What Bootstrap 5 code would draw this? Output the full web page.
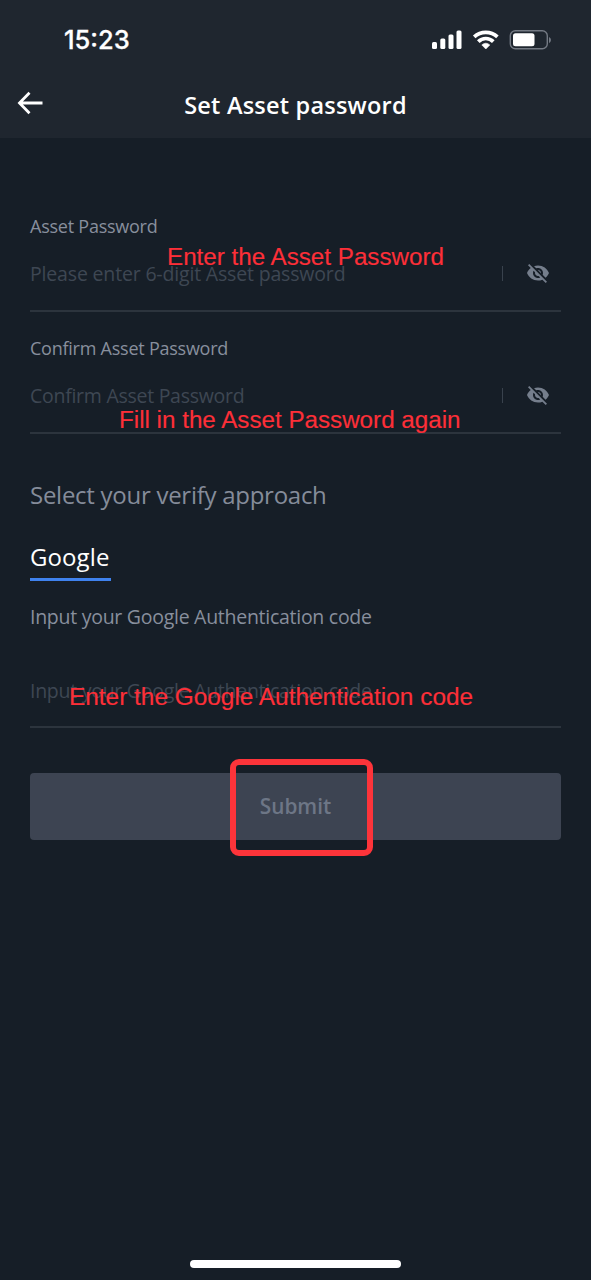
<!DOCTYPE html>
<html lang="en">
<head>
<meta charset="utf-8">
<meta name="viewport" content="width=device-width, initial-scale=1">
<title>Set Asset password</title>
<link href="https://cdn.jsdelivr.net/npm/bootstrap@5.3.0/dist/css/bootstrap.min.css" rel="stylesheet">
<style>
  body { background: #161e27; color: #fff; font-family: "Open Sans", "Noto Sans", sans-serif; height: 1280px; overflow: hidden; }
  .app-header { background: #1f262f; height: 138px; }
  .status-bar { height: 79px; padding: 0 40px 0 64px; }
  .clock { font: 500 25.5px/1 Inter, sans-serif; -webkit-text-stroke: .3px #fff; }
  .title-bar { height: 52px; padding: 0 17px; }
  .title-bar h1 { font-size: 23.5px; font-weight: 600; letter-spacing: .22px; line-height: 52px; }
  .back { width: 27px; }
  .back svg { margin-top: -5px; }
  main { padding: 73px 30px 0; }
  .field { height: 101px; border-bottom: 2px solid #2c343d; }
  .field + .field { margin-top: 21px; }
  .field label { display: block; font-size: 18px; line-height: 30px; letter-spacing: -.24px; color: #888f9d; }
  .entry { height: 64px; }
  .entry .form-control { height: 40px; font-size: 19.5px; letter-spacing: -.17px; color: #fff; }
  .entry #pw2 { letter-spacing: -.27px; }
  .entry .form-control::placeholder { color: #3e4753; opacity: 1; }
  .divider { width: 1.5px; height: 15px; background: #39424d; }
  .eye { width: 24px; margin: 0 11px 0 23px; fill: #757e8c; }
  .section-title { font-size: 24px; line-height: 36px; letter-spacing: -.27px; color: #858c9a; margin-top: 43px; }
  .method { font-size: 24px; line-height: 40px; height: 44px; width: 81px; letter-spacing: .1px; border-bottom: 3px solid #3f82ee; margin-top: 24px; }
  .code-field { height: 126px; margin-top: 21px; }
  .code-field label { font-size: 19.5px; letter-spacing: -.27px; margin-bottom: 26px; }
  .entry #code { letter-spacing: -.27px; }
  .submit-area { padding-top: 45px; }
  .submit-btn { --bs-btn-disabled-opacity: 1; --bs-btn-disabled-bg: #3d4452; --bs-btn-disabled-color: #6d7686; height: 67px; border: 0; border-radius: 4px; font-size: 20.8px; font-weight: 600; }
  .note { font: 24.2px/28px "Liberation Sans", Arial, sans-serif; color: #fd2f38; -webkit-text-stroke: .15px #fd2f38; white-space: nowrap; pointer-events: none; }
  .note-asset { left: 137px; top: 32px; }
  .note-confirm { left: 89px; top: 73px; }
  .note-code { left: 39px; top: 81px; font-size: 24.4px; }
  .note-submit { left: 200px; top: 31px; width: 143px; height: 97px; border: 6px solid #fd343a; border-radius: 9px; pointer-events: none; }
  .home-bar { left: 190px; bottom: 12px; width: 211px; height: 8px; }
</style>
</head>
<body class="position-relative">
<header class="app-header">
  <div class="status-bar d-flex align-items-center justify-content-between">
    <span class="clock">15:23</span>
    <svg width="120" height="22" viewBox="0 0 120 22" fill="#fff" aria-hidden="true">
      <rect x="1" y="13" width="5" height="7" rx="1.5"/>
      <rect x="9.300" y="9.500" width="5" height="10.500" rx="1.5"/>
      <rect x="17.500" y="5.500" width="5" height="14.500" rx="1.500"/>
      <rect x="25.500" y="1.500" width="5" height="18.500" rx="1.500"/>
      <path d="M54.800 20 50.800 15.900a6.200 6.200 0 0 1 8 0Z" stroke="#fff" stroke-width=".6" stroke-linejoin="round"/>
      <path d="M47.300 12.600a10.600 10.600 0 0 1 15 0M43.200 7.900a17 17 0 0 1 23.200 0" fill="none" stroke="#fff" stroke-width="3.700"/>
      <rect x="79.300" y="1.700" width="37" height="18" rx="5" fill="none" stroke="#737983" stroke-width="1.400"/>
      <rect x="82" y="4.200" width="21.500" height="13" rx="2.500"/>
      <path d="M118 8v6.200q2-1 2-3.100t-2-3.100Z" fill="#737983"/>
    </svg>
  </div>
  <div class="title-bar d-flex align-items-center justify-content-between">
    <a class="back d-flex" href="#" aria-label="Back">
      <svg width="27" height="24" viewBox="0 0 27 24" fill="none" stroke="#fff" stroke-width="2.800"><path d="M2.500 12H25.500M12.500 1.800 2.500 12l10 10.200"/></svg>
    </a>
    <h1 class="m-0">Set Asset password</h1>
    <span class="back"></span>
  </div>
</header>
<main>
  <form>
    <div class="field position-relative">
      <label for="pw">Asset Password</label>
      <div class="entry d-flex align-items-center">
        <input id="pw" class="form-control bg-transparent border-0 p-0" placeholder="Please enter 6-digit Asset password">
        <span class="divider flex-shrink-0"></span>
        <svg class="eye flex-shrink-0" viewBox="0 0 24 24" aria-hidden="true"><path d="M12 7c2.760 0 5 2.240 5 5 0 .650-.130 1.260-.360 1.830l2.920 2.920c1.510-1.260 2.700-2.890 3.430-4.750-1.730-4.390-6-7.500-11-7.500-1.400 0-2.740.250-3.980.700l2.160 2.160C10.740 7.130 11.350 7 12 7zM2 4.270l2.740 2.740C3.080 8.300 1.780 10.020 1 12c1.730 4.390 6 7.500 11 7.500 1.550 0 3.030-.300 4.380-.840L19.730 22 21 20.730 3.270 3 2 4.270zM7.530 9.800l1.550 1.550c-.050.210-.080.430-.080.650 0 1.660 1.340 3 3 3 .220 0 .440-.030.650-.080l1.550 1.550c-.670.330-1.410.530-2.200.530-2.760 0-5-2.240-5-5 0-.790.200-1.530.530-2.200zm4.310-.780l3.150 3.150.020-.160c0-1.660-1.340-3-3-3l-.170.010z"/></svg>
      </div>
      <span class="note note-asset position-absolute">Enter the Asset Password</span>
    </div>
    <div class="field position-relative">
      <label for="pw2">Confirm Asset Password</label>
      <div class="entry d-flex align-items-center">
        <input id="pw2" class="form-control bg-transparent border-0 p-0" placeholder="Confirm Asset Password">
        <span class="divider flex-shrink-0"></span>
        <svg class="eye flex-shrink-0" viewBox="0 0 24 24" aria-hidden="true"><path d="M12 7c2.760 0 5 2.240 5 5 0 .650-.130 1.260-.360 1.830l2.920 2.920c1.510-1.260 2.700-2.890 3.430-4.750-1.730-4.390-6-7.500-11-7.500-1.400 0-2.740.250-3.980.700l2.160 2.160C10.740 7.130 11.350 7 12 7zM2 4.270l2.740 2.740C3.080 8.300 1.780 10.020 1 12c1.730 4.390 6 7.500 11 7.500 1.550 0 3.030-.300 4.380-.840L19.730 22 21 20.730 3.270 3 2 4.270zM7.530 9.800l1.550 1.550c-.050.210-.080.430-.080.650 0 1.660 1.340 3 3 3 .220 0 .440-.030.650-.080l1.550 1.550c-.670.330-1.410.530-2.200.530-2.760 0-5-2.240-5-5 0-.790.200-1.530.530-2.200zm4.310-.780l3.150 3.150.020-.160c0-1.660-1.340-3-3-3l-.170.010z"/></svg>
      </div>
      <span class="note note-confirm position-absolute">Fill in the Asset Password again</span>
    </div>
    <h2 class="section-title mb-0 fw-normal">Select your verify approach</h2>
    <div class="method">Google</div>
    <div class="field code-field position-relative">
      <label for="code">Input your Google Authentication code</label>
      <div class="entry d-flex align-items-center">
        <input id="code" class="form-control bg-transparent border-0 p-0" placeholder="Input your Google Authentication code">
      </div>
      <span class="note note-code position-absolute">Enter the Google Authentication code</span>
    </div>
    <div class="submit-area position-relative">
      <button type="button" class="btn btn-secondary submit-btn w-100" disabled>Submit</button>
      <span class="note-submit position-absolute"></span>
    </div>
  </form>
</main>
<div class="home-bar position-absolute bg-white rounded-pill"></div>
<script src="https://cdn.jsdelivr.net/npm/bootstrap@5.3.0/dist/js/bootstrap.bundle.min.js"></script>
</body>
</html>
